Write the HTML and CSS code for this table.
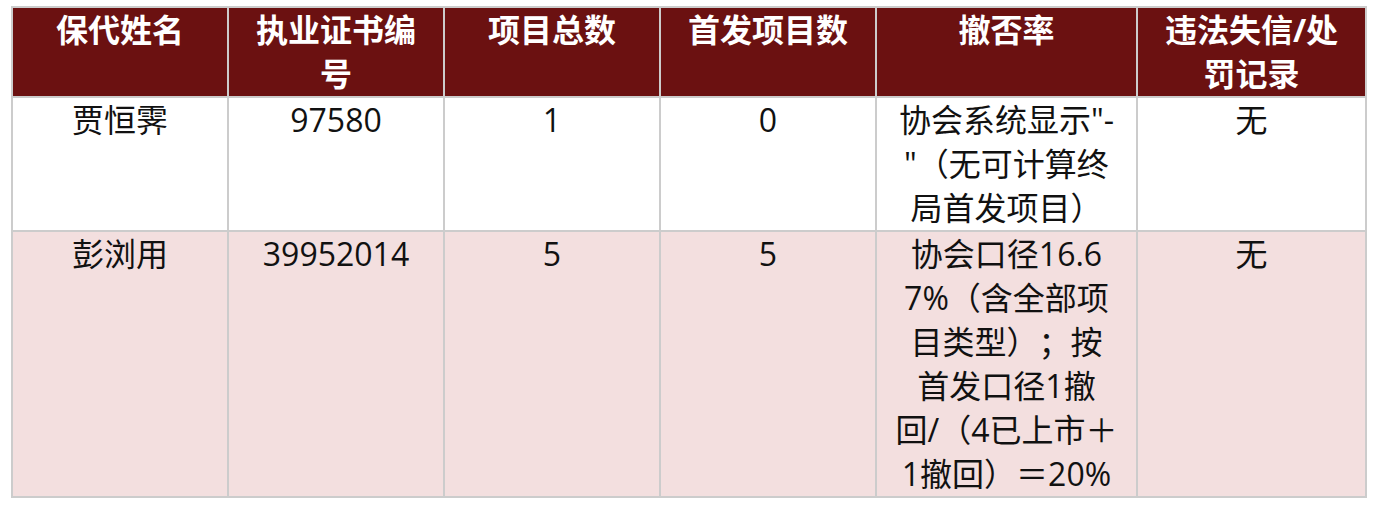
FILE: index.html
```html
<!DOCTYPE html>
<html lang="zh-CN">
<head>
<meta charset="utf-8">
<title>保代信息</title>
<link rel="stylesheet" href="styles.css">
</head>
<body>
<div class="wrap">
<table class="sheet">
  <colgroup>
    <col class="c-name">
    <col class="c-cert">
    <col class="c-total">
    <col class="c-ipo">
    <col class="c-rate">
    <col class="c-rec">
  </colgroup>
  <thead>
    <tr>
      <th>保代姓名</th>
      <th>执业证书编<br>号</th>
      <th>项目总数</th>
      <th>首发项目数</th>
      <th>撤否率</th>
      <th>违法失信/处<br>罚记录</th>
    </tr>
  </thead>
  <tbody>
    <tr>
      <td>贾恒霁</td>
      <td>97580</td>
      <td>1</td>
      <td>0</td>
      <td class="multi">协会系统显示"-<br>"（无可计算终<br>局首发项目）</td>
      <td>无</td>
    </tr>
    <tr class="alt">
      <td>彭浏用</td>
      <td>39952014</td>
      <td>5</td>
      <td>5</td>
      <td class="multi">协会口径16.6<br>7%（含全部项<br>目类型）；按<br>首发口径1撤<br>回/（4已上市＋<br>1撤回）＝20%</td>
      <td>无</td>
    </tr>
  </tbody>
</table>
</div>
</body>
</html>
```
FILE: styles.css
```css
html, body {
  margin: 0;
  padding: 0;
  background: #ffffff;
}

.wrap {
  padding: 6px 11px;
}

.sheet {
  border-collapse: collapse;
  table-layout: fixed;
  width: 1354px;
  font-family: "Open Sans", "Noto Sans CJK SC", sans-serif;
  font-size: 32px;
  line-height: 44px;
  color: #111111;
  text-spacing-trim: space-all;
}

.c-name, .c-cert, .c-total, .c-ipo { width: 216px; }
.c-rate { width: 261px; }
.c-rec { width: 229px; }

.sheet th,
.sheet td {
  border: 2px solid #cccccc;
  padding: 0 12px;
  text-align: center;
  vertical-align: top;
}

.sheet th {
  background: #6b1111;
  color: #ffffff;
  font-weight: 700;
}

.sheet td {
  background: #ffffff;
  font-weight: 400;
}

.sheet td.multi {
  white-space: nowrap;
}

.sheet tr.alt td {
  background: #f3dfdf;
}
```
